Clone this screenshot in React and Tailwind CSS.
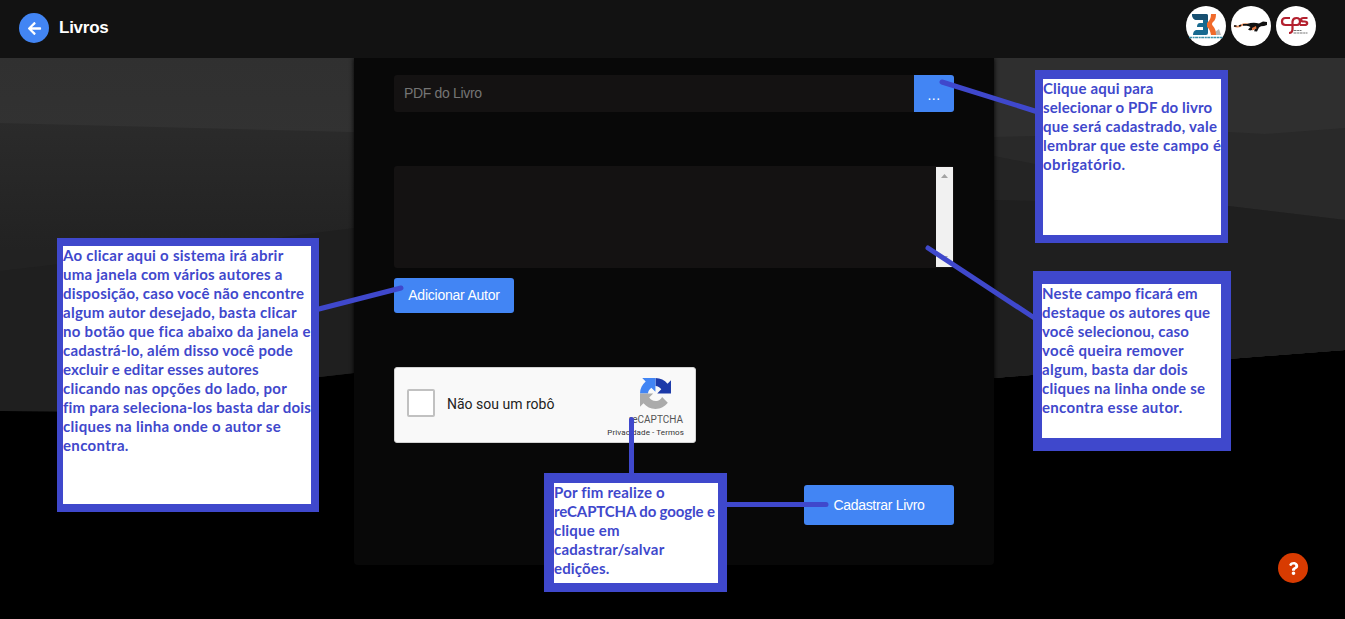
import { FaArrowLeft, FaQuestion } from "react-icons/fa";

function Backdrop() {
  return (
    <svg className="absolute inset-0 h-[619px] w-[1345px]" viewBox="0 0 1345 619" aria-hidden="true">
      <defs>
        <linearGradient id="top" x1="0" y1="58" x2="0" y2="140" gradientUnits="userSpaceOnUse">
          <stop offset="0" stopColor="#303030" />
          <stop offset="1" stopColor="#323232" />
        </linearGradient>
        <linearGradient id="mid" x1="0" y1="120" x2="0" y2="250" gradientUnits="userSpaceOnUse">
          <stop offset="0" stopColor="#2b2b2b" />
          <stop offset="1" stopColor="#222222" />
        </linearGradient>
      </defs>
      <rect width="1345" height="619" fill="#000" />
      <path d="M0 58H354V134H0Z" fill="url(#top)" />
      <path d="M0 123L354 132V373L319 377L170 412L0 411Z" fill="url(#mid)" />
      <path d="M0 271Q200 248 354 228V373L319 377L170 412L0 411Z" fill="#1f1f1f" />
      <path d="M994 58H1345V350L1228 359L994 378Z" fill="#2f2f2f" />
      <path d="M994 137L1228 132L1265 134L1345 128V350L1228 359L994 378Z" fill="#292929" />
      <path d="M994 156L1040 165L1228 206L1345 220V350L1228 359L994 378Z" fill="#242424" />
      <path d="M994 200L1228 206L1345 220V350L1228 359L994 378Z" fill="#1f1f1f" />
    </svg>
  );
}

function Logos() {
  return (
    <div className="flex gap-[5px]">
      <svg className="size-10" viewBox="0 0 40 40">
        <circle cx="20" cy="20" r="20" fill="#fff" />
        <path d="M25 29l8-6 2 6z" fill="#b5b5b5" />
        <path d="M6 8h14q2 0 2 2v17q0 2-2 2H7q0-4 3-5h7v-3h-6q0-4 3-4h3v-3H10q-4-1-4-6z" fill="#176a90" />
        <path d="M6 8h14q2 0 2 2v4H10q-4-1-4-6z" fill="#174f70" />
        <path d="M25 8h5q0 6-3 8-2 2 0 4 3 3 3 9h-5q-1-6-4-8v-4q4-3 4-9z" fill="#f06a2b" />
        <path d="M3 31.500h34" stroke="#3c91aa" strokeWidth="1.500" strokeDasharray="3 .6 2 .5" />
      </svg>
      <svg className="size-10" viewBox="0 0 40 40">
        <circle cx="20" cy="20" r="20" fill="#fff" />
        <path d="M3 20q4 1.500 7-.5t8-1" fill="none" stroke="#df8350" strokeWidth="1.700" />
        <path d="M3 20h2.500M8 20l2-.7M12 18.800h5" stroke="#111" strokeWidth="1.700" />
        <path d="M16 18q6-2 12-.5l4-2 4 .5v3l-3 1-3 .2-2 1.300-2 4-3-.2 1-2-5 1.200-2-1 2.500-2.500-3.500-1.500z" fill="#111" />
        <path d="M21 22l4-2 .5 2.500-4.500 2z" fill="#df7440" />
      </svg>
      <svg className="size-10" viewBox="0 0 40 40">
        <circle cx="20" cy="20" r="20" fill="#fff" />
        <g fill="none" stroke="#b3202e" strokeWidth="2.200">
          <path d="M14 12H9.500Q6 12 6 15.500T9.500 19H21q3 0 3-3.500T20.500 12 16.500 15.500V23q0 4-3.500 4" />
          <path d="M31.500 12h-4q-2.500 0-2.500 1.700t2.500 1.800h1q2.700 0 2.700 1.700T28.500 19H24" />
        </g>
        <path d="M17.500 24.500h8M17.500 27h14" stroke="#777" strokeWidth="1.200" strokeDasharray="3 .6 2 .5" />
      </svg>
    </div>
  );
}

function RecaptchaLogo() {
  return (
    <svg className="size-[31px]" viewBox="0 0 64 64">
      <path d="M64 31.955a33 33 0 0 0-.037-1.380V4.687l-7.157 7.157C50.948 4.674 42.033.093 32.050.093V16.300c5 .4 9 3.100 11.828 7.124l-8.302 8.531z" fill="#1c3aa9" />
      <path d="M31.862.094H4.594l7.157 7.157C4.580 13.147 0 22.060 0 32.046h16.400c.4-5 3.100-9 6.981-11.828l8.481 8.302z" fill="#4285f4" />
      <path d="M.001 32.045v27.268l7.157-7.157c5.860 7.170 14.774 11.751 24.759 11.751 10.400 0 19.622-4.960 25.458-12.640L45.680 39.413a15.550 15.550 0 0 1-4.754 5.334c-2.050 1.600-4.952 2.906-8.968 2.906-5.500-.3-10-3-12.963-7.287l8.302-8.302z" fill="#ababab" />
    </svg>
  );
}

function Note({ className, lines }) {
  return (
    <div className={`absolute z-20 border-[#3f48cc] bg-white font-['Lato','Open_Sans',sans-serif] text-[15px] leading-[19px] font-bold whitespace-nowrap text-[#3f48cc] ${className}`}>
      {lines.map(([text, spacing]) => (
        <div key={text} className={spacing}>{text}</div>
      ))}
    </div>
  );
}

export default function App() {
  return (
    <div className="relative h-[619px] w-[1345px] overflow-hidden bg-black font-['Liberation_Sans',Arial,sans-serif]">
      <Backdrop />
      <header className="relative z-10 flex h-[58px] items-center justify-between bg-[#121212] pr-[29px] pl-[19px]">
        <div className="flex items-center gap-[10px] pb-[2px]">
          <button className="flex size-[30px] items-center justify-center rounded-full bg-[#4285f4] text-white">
            <FaArrowLeft size={15} />
          </button>
          <h1 className="text-[17px] font-bold tracking-[-0.25px] text-white">Livros</h1>
        </div>
        <div className="pb-[6px]"><Logos /></div>
      </header>

      <main className="relative mr-[351px] ml-auto h-[507px] w-[640px] rounded-b-[4px] bg-[#080808] px-10 pt-[17px] shadow-[0_0_5px_#000]">
        <div className="flex h-[37px] overflow-hidden rounded-[3px] bg-[#141212]">
          <div className="flex-1 pl-[10px] text-[14px] leading-[37px] tracking-[-0.33px] text-[#757575]">PDF do Livro</div>
          <button className="w-10 bg-[#4285f4] pt-[3px] text-[14px] tracking-[0.5px] text-white">...</button>
        </div>
        <div className="mt-[54px] flex h-[102px] justify-end rounded-[3px] bg-[#141212] p-px">
          <div className="flex w-[17px] flex-col items-center justify-between bg-[#f1f1f1] py-[7px]">
            <svg className="h-1 w-[7px]" viewBox="0 0 7 4"><path d="M0 4L3.500 0L7 4z" fill="#a3a3a3" /></svg>
            <svg className="h-1 w-[7px]" viewBox="0 0 7 4"><path d="M0 0L3.500 4L7 0z" fill="#a3a3a3" /></svg>
          </div>
        </div>
        <button className="mt-[10px] block h-[35px] w-[120px] rounded-[3px] bg-[#4285f4] text-[14px] tracking-[-0.23px] text-white">Adicionar Autor</button>

        <div className="mt-[54px] flex h-[76px] w-[302px] rounded-[3px] border border-[#d3d3d3] bg-[#f9f9f9] font-[Roboto,sans-serif]">
          <div className="mt-[21px] ml-3 size-7 rounded-[2px] border-2 border-[#c1c1c1] bg-white" />
          <div className="ml-3 flex-1 text-[14px] leading-[72px] text-[#222]">Não sou um robô</div>
          <div className="flex w-[90px] flex-col items-end pt-[10px] pr-[11px]">
            <div className="mr-[13px]"><RecaptchaLogo /></div>
            <div className="mt-[5px] mr-px text-[10px] leading-[12px] text-[#555]">reCAPTCHA</div>
            <div className="text-[8px] leading-[13px] tracking-[0.1px] whitespace-nowrap text-[#333]">Privacidade - Termos</div>
          </div>
        </div>
        <div className="mt-[42px] flex justify-end">
          <button className="h-10 w-[150px] rounded-[3px] bg-[#4285f4] text-[14px] tracking-[-0.3px] text-white">Cadastrar Livro</button>
        </div>
      </main>

      <svg className="absolute inset-0 z-20 h-[619px] w-[1345px]" viewBox="0 0 1345 619" fill="none" stroke="#3f48cc" strokeWidth="5" strokeLinecap="round">
        <path d="M942 82L1038 112M928 248L1036 319M315 310L401 288M631.500 419.500V478M722 504.500H826" />
      </svg>

      <Note
        className="top-[238px] left-[57px] h-[274px] w-[262px] border-t-8 border-r-8 border-b-8 border-l-6"
        lines={[
          ["Ao clicar aqui o sistema irá abrir", "tracking-[0.27px]"],
          ["uma janela com vários autores a", "tracking-[0.25px]"],
          ["disposição, caso você não encontre", "tracking-[0.23px]"],
          ["algum autor desejado, basta clicar", "tracking-[0.27px]"],
          ["no botão que fica abaixo da janela e", "tracking-[0.29px]"],
          ["cadastrá-lo, além disso você pode", "tracking-[0.21px]"],
          ["excluir e editar esses autores", "tracking-[0.15px]"],
          ["clicando nas opções do lado, por", "tracking-[0.27px]"],
          ["fim para seleciona-los basta dar dois", "tracking-[0.2px]"],
          ["cliques na linha onde o autor se", "tracking-[0.29px]"],
          ["encontra.", "tracking-[0.33px]"],
        ]}
      />
      <Note
        className="top-[70px] left-[1035px] h-[173px] w-[193px] border-t-9 border-r-7 border-b-8 border-l-8"
        lines={[
          ["Clique aqui para", "tracking-[0.2px]"],
          ["selecionar o PDF do livro", "tracking-[0.13px]"],
          ["que será cadastrado, vale", "tracking-[0.28px]"],
          ["lembrar que este campo é", "tracking-[0.28px]"],
          ["obrigatório.", "tracking-[0.4px]"],
        ]}
      />
      <Note
        className="top-[271px] left-[1033px] h-[180px] w-[198px] border-t-13 border-r-10 border-b-13 border-l-9"
        lines={[
          ["Neste campo ficará em", "tracking-[0.15px]"],
          ["destaque os autores que", "tracking-[0.25px]"],
          ["você selecionou, caso", "tracking-[0.15px]"],
          ["você queira remover", "tracking-[0.3px]"],
          ["algum, basta dar dois", "tracking-[0.3px]"],
          ["cliques na linha onde se", "tracking-[0.25px]"],
          ["encontra esse autor.", "tracking-[0.3px]"],
        ]}
      />
      <Note
        className="top-[473px] left-[544px] h-[119px] w-[183px] border-t-10 border-r-9 border-b-9 border-l-10"
        lines={[
          ["Por fim realize o", "tracking-[0.2px]"],
          ["reCAPTCHA do google e", "tracking-[-0.14px]"],
          ["clique em", "tracking-[0.2px]"],
          ["cadastrar/salvar", "tracking-[0.25px]"],
          ["edições.", "tracking-[0.15px]"],
        ]}
      />

      <button className="absolute top-[553px] left-[1278px] flex size-[30px] items-center justify-center rounded-full bg-[#d83b01] text-white">
        <FaQuestion size={13} />
      </button>
    </div>
  );
}
